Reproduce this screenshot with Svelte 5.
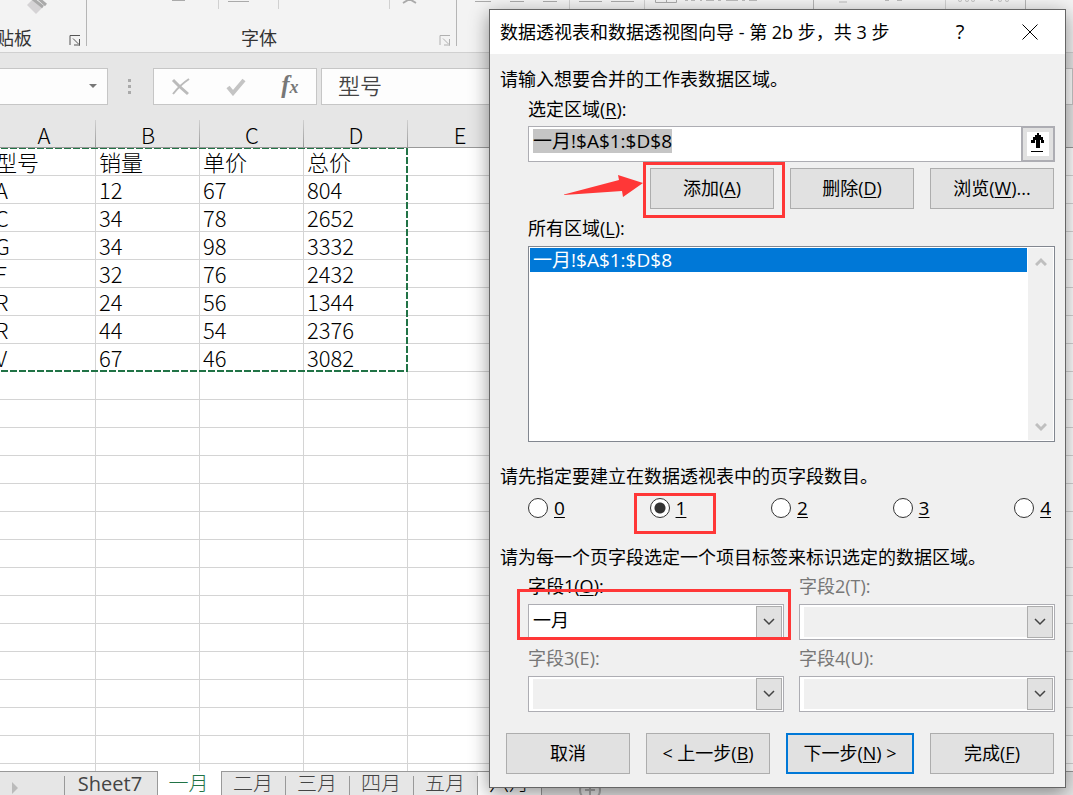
<script>
  const columns = ['A', 'B', 'C', 'D', 'E', 'F', 'G', 'H', 'I', 'J', 'K'];
  const data = [
    ['型号', '销量', '单价', '总价'],
    ['A', '12', '67', '804'],
    ['C', '34', '78', '2652'],
    ['G', '34', '98', '3332'],
    ['F', '32', '76', '2432'],
    ['R', '24', '56', '1344'],
    ['R', '44', '54', '2376'],
    ['V', '67', '46', '3082']
  ];
  const rows = Array.from({ length: 23 }, (_, r) => columns.map((_, c) => data[r]?.[c] ?? ''));
  const sheets = ['二月', '三月', '四月', '五月'];
  const counts = ['0', '1', '2', '3', '4'];
  const fields = [
    { n: 1, key: 'O', value: '一月', enabled: true },
    { n: 2, key: 'T', value: '', enabled: false },
    { n: 3, key: 'E', value: '', enabled: false },
    { n: 4, key: 'U', value: '', enabled: false }
  ];
  let count = $state('1');
  let range = $state('一月!$A$1:$D$8');
</script>

{#snippet launcher()}
  <svg width="12" height="11" viewBox="0 0 12 11" fill="none" stroke="currentColor" aria-hidden="true">
    <path d="M1 10V.5H11" /><path d="M4 3.5l5.5 5.5M10.500 4v6.500M5 10H11" />
  </svg>
{/snippet}

<div class="app">
  <header class="ribbon">
    <div class="group clip"><span>贴板</span><button aria-label="剪贴板设置">{@render launcher()}</button></div>
    <div class="group font"><span>字体</span><button class="dim" aria-label="字体设置">{@render launcher()}</button></div>
    <div class="group rest"></div>
    <svg class="remains" width="1073" height="16" aria-hidden="true" fill="none">
      <path d="M27 5l6-6 10 8-7 7z" fill="#d5d3d5" /><path d="M33-1l10 8M38-2l8 7" stroke="#aaa" stroke-width="3" />
      <path d="M172 .5h13M228 1.500h21M475 1.500h16M510 1.500h14M543 1.500h14M579 1.500h23M611 1.500h23" stroke="#aaa" />
      <path d="M218.500 0v9M278.500 0v9M389.500 0v9M569.500 0v9M644.500 0v9M945.500 0v9" stroke="#d0d0d0" />
      <path d="M403 3l5-3 3 0 5 3" stroke="#aaa" stroke-width="2" />
      <path d="M813.500 0v9M1025.500 0v9" stroke="#b5b5b5" />
      <path d="M655.500 0v2.500h21V0M666.500 0v2" stroke="#aaa" />
      <path d="M685 .5h3m3 0h4m5 0h2m4 0h8m4 0h3m5 0h12m4 0h3m4 0h8M839 2h8M885 .5h4m8 0h5M958 .5q2 2 4 0M965 .5q2 2 4 0M971 .5q2 2 4 0M990 .5h3M998 .5q2 2 4 0M1005 .5q2 2 4 0" stroke="#bbb" />
    </svg>
  </header>

  <div class="formula-row">
    <button class="namebox" aria-label="名称框"><svg width="8" height="5" aria-hidden="true"><path d="M0 0h8L4 4z" fill="#777" /></svg></button>
    <div class="dots"><i></i><i></i><i></i></div>
    <div class="tools">
      <button aria-label="取消"><svg width="20" height="18" fill="none" stroke="#bbb" aria-hidden="true"><path d="M2 2l6 6 9 8" stroke-width="3" /><path d="M18 1Q9 7 2 16" stroke-width="2" /></svg></button>
      <button aria-label="输入"><svg width="20" height="18" fill="none" stroke="#c4c4c4" stroke-width="4" aria-hidden="true"><path d="M2 9l5 6L18 2" /></svg></button>
      <button class="fx" aria-label="插入函数">f<sub>x</sub></button>
    </div>
    <input class="formula" aria-label="编辑栏" value="型号" />
  </div>

  <main class="sheet">
    <table>
      <colgroup><col class="first" />{#each columns.slice(1) as c (c)}<col />{/each}</colgroup>
      <thead><tr>{#each columns as c (c)}<th scope="col">{c}</th>{/each}</tr></thead>
      <tbody>
        {#each rows as row}
          <tr>{#each row as cell}<td>{cell}</td>{/each}</tr>
        {/each}
      </tbody>
    </table>
    <div class="ants"></div>
  </main>

  <nav class="tabs">
    <div class="scroll"><svg width="7" height="12" aria-hidden="true"><path d="M0 0l6 6-6 6z" fill="#bbb" /></svg></div>
    <button class="wide">Sheet7</button>
    <button class="active">一月</button>
    {#each sheets as s (s)}<button>{s}</button>{/each}
    <button class="light">六月</button>
    <button class="add" aria-label="新工作表"><svg width="24" height="24" fill="none" stroke="#aaa" stroke-width="2" aria-hidden="true"><circle cx="12" cy="12" r="10" /><path d="M12 7v10M7 12h10" /></svg></button>
  </nav>
</div>

<div class="dialog" role="dialog" aria-labelledby="title">
  <div class="title">
    <h1 id="title">数据透视表和数据透视图向导 - 第 2b 步，共 3 步</h1>
    <button aria-label="帮助">?</button>
    <button aria-label="关闭"><svg width="16" height="16" stroke="#000" aria-hidden="true"><path d="M.5.5l15 15M15.500.5l-15 15" /></svg></button>
  </div>
  <form class="body" onsubmit={(e) => e.preventDefault()}>
    <p class="intro">请输入想要合并的工作表数据区域。</p>
    <div class="indent">
      <label class="range-label" for="range">选定区域(<u>R</u>):</label>
      <div class="range">
        <input id="range" bind:value={range} />
        <button type="button" aria-label="折叠对话框">
          <svg width="22" height="24" aria-hidden="true"><path fill="#fff" d="M0 0h22v24H0z" /><path d="M10 1h2v2h2v2h2v3h1v3h-3V8h-1v8H9V8H8v3H4V8h2V5h2V3h2zM4 19h12v1H4z" /></svg>
        </button>
      </div>
      <div class="actions">
        <div class="marked"><button type="button">添加(<u>A</u>)</button>
          <div class="mark add-mark"></div>
          <svg class="arrow" width="80" height="24" aria-hidden="true"><path d="M0 20.500L55 6l-1-5 25 8-20 14-1-6L0 21z" fill="#ff3737" /></svg>
        </div>
        <button type="button">删除(<u>D</u>)</button>
        <button type="button">浏览(<u>W</u>)...</button>
      </div>
      <div class="list-label" id="all">所有区域(<u>L</u>):</div>
      <div class="list">
        <ul role="listbox" aria-labelledby="all"><li role="option" aria-selected="true">一月!$A$1:$D$8</li></ul>
        <div class="bar">
          <svg width="12" height="9" fill="none" stroke="#bfbfbf" stroke-width="3" aria-hidden="true"><path d="M1 8l5-5 5 5" /></svg>
          <svg width="12" height="9" fill="none" stroke="#bfbfbf" stroke-width="3" aria-hidden="true"><path d="M1 1l5 5 5-5" /></svg>
        </div>
      </div>
    </div>
    <p class="pages">请先指定要建立在数据透视表中的页字段数目。</p>
    <div class="indent radios">
      {#each counts as c (c)}
        <label><input type="radio" name="count" value={c} bind:group={count} /><u>{c}</u>{#if c === '1'}<span class="mark radio-mark"></span>{/if}</label>
      {/each}
    </div>
    <p class="items">请为每一个页字段选定一个项目标签来标识选定的数据区域。</p>
    <div class="indent fields">
      {#each fields as f (f.n)}
        <div class="field" class:off={!f.enabled}>
          <label for="field{f.n}">字段{f.n}({#if f.enabled}<u>{f.key}</u>{:else}{f.key}{/if}):</label>
          <div class="combo">
            <select id="field{f.n}" disabled={!f.enabled}><option>{f.value}</option></select>
            <span class="drop"><svg width="12" height="8" fill="none" stroke="#444" aria-hidden="true"><path d="M1 1l5 5 5-5" stroke-width="1.500" /></svg></span>
          </div>
          {#if f.enabled}<div class="mark field-mark"></div>{/if}
        </div>
      {/each}
    </div>
    <div class="footer">
      <button type="button">取消</button>
      <button type="button">&lt; 上一步(<u>B</u>)</button>
      <button type="submit" class="default">下一步(<u>N</u>) &gt;</button>
      <button type="button">完成(<u>F</u>)</button>
    </div>
  </form>
</div>

<style>
  :global(body) { overflow: hidden; }
  * { box-sizing: border-box; }
  .app, .dialog { font-family: "Open Sans", "Noto Sans CJK SC", sans-serif; color: #000; }
  button, input, select { font: inherit; color: inherit; margin: 0; padding: 0; border: 0; border-radius: 0; background: none; outline: 0; }
  svg { display: block; }
  h1, p, ul { margin: 0; padding: 0; font-weight: inherit; }
  u { text-underline-offset: 2px; text-decoration-thickness: 1px; }

  .app { height: 100vh; display: flex; flex-direction: column; background: #e6e6e6; overflow: hidden; }
  .ribbon { position: relative; flex: none; height: 53px; display: flex; background: #f3f3f3; border-bottom: 1px solid #d0d0d0; font-size: 18px; line-height: 24px; color: #333; }
  .remains { position: absolute; left: 0; top: 0; }
  .group { display: flex; align-items: flex-end; justify-content: space-between; height: 46px; border-right: 1px solid #b5b5b5; padding-right: 5px; }
  .group span { display: flex; align-items: center; height: 16px; }
  .group button { color: #555; }
  .group button.dim { color: #b0b0b0; }
  .clip { width: 87px; }
  .clip span { margin-left: -4px; }
  .font { width: 370px; }
  .font span { flex: 1; justify-content: center; padding-right: 8px; }
  .rest { flex: 1; border: 0; }

  .formula-row { flex: none; display: flex; height: 67px; padding: 15px 0; }
  .namebox, .tools, .formula { border: 1px solid #c6c6c6; background: #fdfdfd; }
  .namebox { width: 108px; border-left: 0; display: flex; align-items: center; justify-content: flex-end; padding-right: 10px; }
  .dots { width: 43px; margin-right: 2px; display: flex; flex-direction: column; gap: 3px; align-items: center; justify-content: center; }
  .dots i { width: 3px; height: 3px; background: #aaa; }
  .tools { width: 164px; display: flex; align-items: center; justify-content: space-around; margin-right: 4px; }
  .tools .fx { padding-bottom: 4px; font: italic bold 25px/28px "Liberation Serif", serif; color: #777; }
  .fx sub { font-size: 18px; line-height: 0; vertical-align: 0; }
  .formula { flex: 1; min-width: 0; padding: 0 0 5px 16px; font: 350 22px/30px "Noto Sans CJK SC", sans-serif; color: #444; }

  .sheet { position: relative; flex: 1; min-height: 0; overflow: hidden; font: 300 22px/27px "Noto Sans CJK SC", sans-serif; }
  table { table-layout: fixed; width: 1136px; border-collapse: separate; border-spacing: 0; }
  col { width: 104px; }
  col.first { width: 96px; }
  th { height: 28px; padding: 3px 0 1px; font-weight: 300; line-height: 23px; background: linear-gradient(#d0d0d0, #999) right / 1px 100% no-repeat #e6e6e6; border-bottom: 1px solid #999; }
  th:first-child { padding-right: 8px; }
  td { height: 28px; padding: 1px 0 1px 3px; line-height: 25px; white-space: nowrap; background: #fff; border-right: 1px solid #d4d4d4; border-bottom: 1px solid #d4d4d4; overflow: hidden; }
  td:first-child { padding-left: 0; text-indent: -5px; }
  .ants { position: absolute; left: 0; top: 28px; width: 408px; height: 224px;
    background:
      repeating-linear-gradient(90deg, #fff 0 1px, #217346 1px 8px, #fff 8px 9px) top / 100% 1px no-repeat,
      repeating-linear-gradient(90deg, #fff 0 1px, #217346 1px 8px, #fff 8px 9px) bottom / 100% 2px no-repeat,
      repeating-linear-gradient(#217346 0 7px, #fff 7px 9px) right / 2px 100% no-repeat; }

  .tabs { position: relative; flex: none; display: flex; height: 24px; font: 300 20px/24px "Open Sans", "Noto Sans CJK SC", sans-serif; color: #444; border-top: 1px solid #999; }
  .tabs > * { flex: none; height: 24px; width: 64px; padding-right: 2px; line-height: 24px; background: linear-gradient(#999, #999) right 4px / 1px 100% no-repeat; white-space: nowrap; }
  .tabs .scroll { width: 65px; padding: 10px 0 0 12px; }
  .tabs .wide { width: 93px; border-right: 1px solid #999; background: none; font-weight: 400; }
  .tabs .active { height: 25px; margin-top: -1px; padding-top: 1px; background: #fff; border-right: 1px solid #999; color: #217346; }
  .tabs .light { background-color: #fdfdfd; color: #000; }
  .tabs .add { width: 24px; margin: 6px 0 0 36px; padding: 0; background: none; }
  .tabs .add svg { height: 24px; }

  .dialog { position: absolute; top: 9px; right: 7px; width: 577px; background: #f0f0f0; border: 1px solid #666; box-shadow: 0 5px 18px rgba(0, 0, 0, .42); font-size: 18px; line-height: 24px; font-weight: 400; }
  .title { display: flex; align-items: center; height: 44px; padding: 0 15px 0 10px; background: #fff; }
  .title h1 { flex: 1; font-size: 18px; }
  .title button { width: 40px; display: flex; justify-content: center; font-size: 20px; }
  .title button + button { margin-left: 30px; }
  .body { display: flex; flex-direction: column; padding: 13px 10px; }
  .indent { margin-left: 28px; }
  .range-label { display: block; margin: 6px 0 5px; }
  .range { display: flex; height: 36px; }
  .range input { flex: 1; min-width: 0; border: 1px solid #adadb3; padding: 0 4px 6px; font-size: 19px; line-height: 24px; background: linear-gradient(#c5c5c5, #c5c5c5) 4px 2px / 139px 24px no-repeat #fff; }
  .range button { width: 33px; border: 2px solid #adadb3; border-left-width: 1px; background: #e1e1e1; display: grid; place-items: center; }
  .actions { display: flex; justify-content: flex-end; gap: 16px; margin: 6px 1px 7px 0; }
  .marked, .field, .radios label { position: relative; }
  .actions button, .footer button { width: 124px; height: 41px; padding-bottom: 2px; border: 1px solid #adadad; background: #e1e1e1; display: block; }
  .mark { position: absolute; border: 3px solid #ff3737; pointer-events: none; }
  .add-mark { inset: -6px -11px -9px -7px; }
  .arrow { position: absolute; left: -86px; top: 6px; }
  .list { display: flex; height: 196px; margin-top: 6px; padding: 1px; background: #fff; border: 1px solid #828790; }
  .list ul { flex: 1; list-style: none; }
  .list li { padding-left: 3px; background: #0078d7; color: #fff; font-size: 19px; }
  .bar { width: 25px; margin-left: 1px; background: #f0f0f0; display: flex; flex-direction: column; align-items: center; justify-content: space-between; padding: 9px 0 8px; }
  .pages { margin: 22px 0 8px; }
  .radios { display: flex; justify-content: space-between; padding-right: 4px; }
  .radios label { display: flex; align-items: center; gap: 6px; font-size: 19px; }
  .radios input { appearance: none; width: 20px; height: 20px; border: 1px solid #333; border-radius: 50%; background: #fff; }
  .radios input:checked { background: radial-gradient(circle, #333 0 5px, #fff 6px); }
  .radio-mark { inset: -3px -30px -14px -16px; }
  .items { margin: 25px 0 5px; }
  .fields { display: grid; grid-template-columns: 1fr 1fr; gap: 6px 15px; }
  .field label { display: block; margin-bottom: 6px; }
  .off label { color: #777; }
  .combo { display: flex; height: 36px; padding: 1px; background: #fff; border: 1px solid #adadb3; }
  .combo select { appearance: none; flex: 1; min-width: 0; margin: 1px 0 1px 3px; padding-bottom: 4px; opacity: 1; }
  .off select { background: #f0f0f0; }
  .drop { width: 26px; border: 1px solid #adadad; background: #e1e1e1; display: grid; place-items: center; }
  .field-mark { inset: 15px -7px 0 -11px; }
  .footer { display: flex; justify-content: space-between; margin: 21px 1px 0 6px; }
  .footer .default { width: 128px; border: 2px solid #0078d7; }
</style>
